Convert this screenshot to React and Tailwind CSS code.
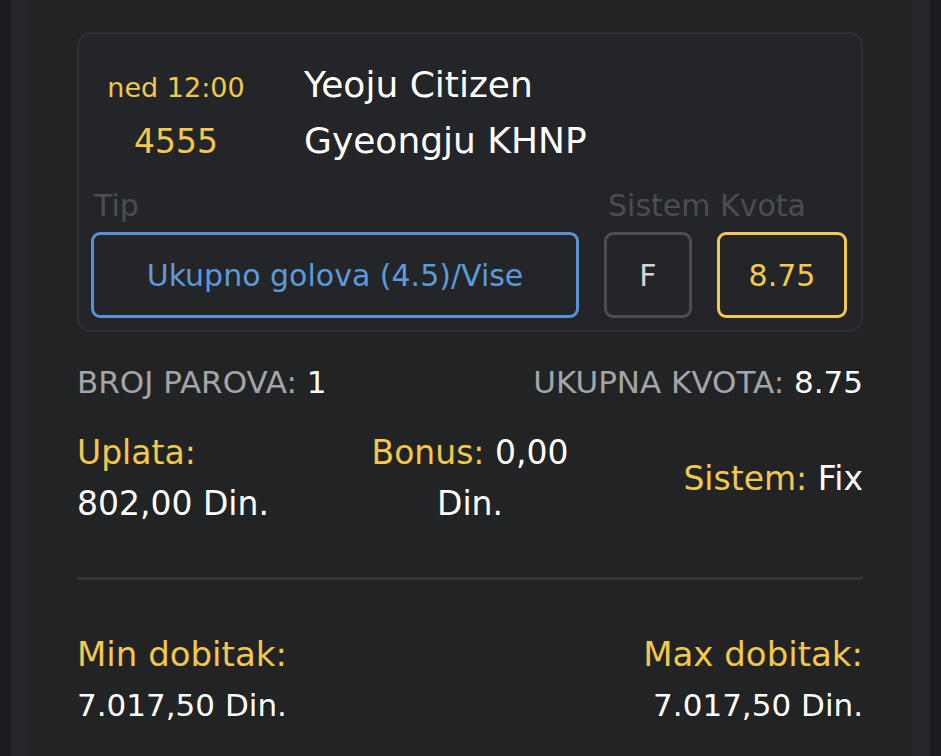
import React from 'react';

const font = { fontFamily: '"DejaVu Sans", "Noto Sans", sans-serif' };

const App = () => {
  return (
    <div className="w-full h-[756px] bg-[#1b1c1f] px-[11px] overflow-hidden" style={font}>
      <div className="h-full bg-[#222325] border-l-[17px] border-r-[18px] border-[#252629] px-[49px] pt-[32px]">
        {/* match card */}
        <div className="bg-[#242528] border-2 border-[#2e3033] rounded-[14px] px-[12px] pt-[24px] pb-[12px]">
          <div className="flex items-baseline leading-[53px]">
            <div className="w-[170px] text-center text-[27px] text-[#f2c94c]">ned 12:00</div>
            <div className="ml-[43px] text-[36px] text-white">Yeoju Citizen</div>
          </div>
          <div className="flex items-baseline leading-[53px]">
            <div className="w-[170px] text-center text-[33px] text-[#f2c94c]">4555</div>
            <div className="ml-[43px] text-[36px] text-white">Gyeongju KHNP</div>
          </div>

          <div className="flex mt-[20px] text-[30px] leading-[36px] text-[#4b4d50]">
            <div className="w-[488px] pl-[3px]">Tip</div>
            <div className="ml-[29px]">Sistem Kvota</div>
          </div>

          <div className="flex gap-[25px] mt-[8px] h-[86px]">
            <div className="w-[488px] flex items-center justify-center border-[3px] border-[#5592d8] rounded-[9px] text-[30px] text-[#5b9bdc]">
              Ukupno golova (4.5)/Vise
            </div>
            <div className="w-[88px] flex items-center justify-center border-[3px] border-[#4c4e52] rounded-[9px] text-[30px] text-[#d4d4d6]">
              F
            </div>
            <div className="w-[130px] flex items-center justify-center border-[3px] border-[#f2c94c] rounded-[9px] text-[30px] text-[#f2c94c]">
              8.75
            </div>
          </div>
        </div>

        {/* totals */}
        <div className="flex justify-between mt-[32px] text-[31px] leading-[36px] text-[#a4a5a8]">
          <div>BROJ PAROVA: <span className="text-white">1</span></div>
          <div>UKUPNA KVOTA: <span className="text-white">8.75</span></div>
        </div>

        <div className="grid grid-cols-3 items-center mt-[27px] text-[33px] leading-[51px] text-white">
          <div>
            <div className="text-[#f2c94c]">Uplata:</div>
            <div>802,00 Din.</div>
          </div>
          <div className="text-center">
            <div><span className="text-[#f2c94c]">Bonus:</span> 0,00</div>
            <div>Din.</div>
          </div>
          <div className="text-right">
            <span className="text-[#f2c94c]">Sistem:</span> Fix
          </div>
        </div>

        <div className="h-[3px] bg-[#333437] mt-[48px]" />

        <div className="flex justify-between mt-[49px] leading-[51px] text-white">
          <div>
            <div className="text-[34px] text-[#f2c94c]">Min dobitak:</div>
            <div className="text-[31px]">7.017,50 Din.</div>
          </div>
          <div className="text-right">
            <div className="text-[34px] text-[#f2c94c]">Max dobitak:</div>
            <div className="text-[31px]">7.017,50 Din.</div>
          </div>
        </div>
      </div>
    </div>
  );
};

export default App;
